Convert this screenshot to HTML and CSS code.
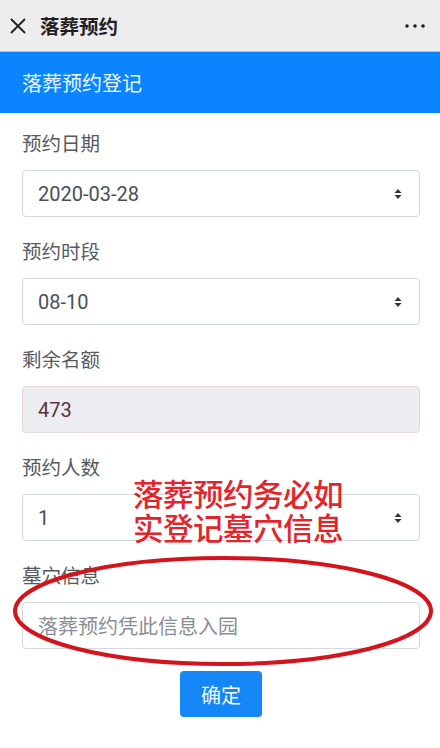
FILE: index.html
```html
<!DOCTYPE html>
<html lang="zh-CN">
<head>
<meta charset="utf-8">
<title>落葬预约</title>
<link rel="stylesheet" href="styles.css">
</head>
<body>
<div class="page">
  <div class="topbar">
    <svg class="close" width="16" height="16" viewBox="0 0 16 16"><path d="M1 1 L15 15 M15 1 L1 15" stroke="#1f1f1f" stroke-width="1.8" fill="none"/></svg>
    <span class="title">落葬预约</span>
    <svg class="more" width="22" height="6" viewBox="0 0 22 6"><circle cx="3" cy="3" r="1.8" fill="#1f1f1f"/><circle cx="11" cy="3" r="1.8" fill="#1f1f1f"/><circle cx="19" cy="3" r="1.8" fill="#1f1f1f"/></svg>
  </div>
  <div class="header">落葬预约登记</div>
  <form class="form">
    <div class="group">
      <div class="label">预约日期</div>
      <div class="control select"><span>2020-03-28</span><svg class="arrows" width="8" height="12" viewBox="0 0 8 12"><path d="M4 1 L7.5 5 L0.5 5 Z M4 11 L7.5 7 L0.5 7 Z" fill="#333"/></svg></div>
    </div>
    <div class="group">
      <div class="label">预约时段</div>
      <div class="control select"><span>08-10</span><svg class="arrows" width="8" height="12" viewBox="0 0 8 12"><path d="M4 1 L7.5 5 L0.5 5 Z M4 11 L7.5 7 L0.5 7 Z" fill="#333"/></svg></div>
    </div>
    <div class="group">
      <div class="label">剩余名额</div>
      <div class="control readonly"><span>473</span></div>
    </div>
    <div class="group">
      <div class="label">预约人数</div>
      <div class="control select"><span>1</span><svg class="arrows" width="8" height="12" viewBox="0 0 8 12"><path d="M4 1 L7.5 5 L0.5 5 Z M4 11 L7.5 7 L0.5 7 Z" fill="#333"/></svg></div>
    </div>
    <div class="group">
      <div class="label">墓穴信息</div>
      <div class="control"><span class="placeholder">落葬预约凭此信息入园</span></div>
    </div>
    <div class="actions"><button type="button" class="btn">确定</button></div>
  </form>
  <div class="note">落葬预约务必如<br>实登记墓穴信息</div>
  <svg class="circle" width="440" height="748" viewBox="0 0 440 748"><ellipse cx="223" cy="611" rx="208" ry="53" fill="none" stroke="#d4141c" stroke-width="4"/></svg>
</div>
</body>
</html>
```

FILE: styles.css
```css
html, body {
  margin: 0;
  padding: 0;
  background: #ffffff;
}
body {
  font-family: Roboto, "Noto Sans CJK SC", sans-serif;
  color: #4a4f55;
}
.page {
  position: relative;
  width: 440px;
  height: 748px;
  overflow: hidden;
  background: #fff;
}
.topbar {
  height: 51px;
  background: #ededee;
  display: flex;
  align-items: center;
  padding: 0 14px 0 10px;
  box-sizing: border-box;
}
.close {
  display: block;
  margin-right: 14px;
}
.title {
  font-size: 19.5px;
  font-weight: 700;
  color: #1f1f1f;
  flex: 1;
}
.more {
  display: block;
}
.header {
  height: 62px;
  background: #0a84ff;
  border-top: 1px solid #8fd0f6;
  box-sizing: border-box;
  display: flex;
  align-items: center;
  padding-left: 22px;
  font-size: 20px;
  color: #eef6ff;
}
.form {
  padding: 17px 20px 0 22px;
  display: flex;
  flex-direction: column;
  gap: 21px;
}
.group {
  display: flex;
  flex-direction: column;
}
.label {
  height: 30px;
  line-height: 30px;
  font-size: 19.5px;
  color: #555a60;
  margin-bottom: 10px;
}
.control {
  height: 47px;
  box-sizing: border-box;
  border: 1px solid #d5d8dc;
  border-radius: 4px;
  display: flex;
  align-items: center;
  justify-content: space-between;
  padding: 0 17px 0 15px;
  font-size: 20px;
  color: #4a4f55;
  background: #fff;
}
.arrows {
  display: block;
}
.readonly {
  background: #ecedf0;
  border-color: #ead7dd;
  color: #5e2f42;
}
.placeholder {
  color: #8a8e93;
}
.actions {
  display: flex;
  justify-content: center;
  margin-top: 1px;
}
.btn {
  width: 82px;
  height: 46px;
  border: none;
  border-radius: 4px;
  background: #1486f5;
  color: #f4f9ff;
  font-family: "Noto Sans CJK SC", sans-serif;
  font-size: 20px;
  padding: 0;
}
.note {
  position: absolute;
  left: 133px;
  top: 476px;
  font-family: "Noto Sans CJK SC", sans-serif;
  font-size: 30.5px;
  line-height: 34px;
  font-weight: 500;
  color: #e3242b;
  letter-spacing: -0.5px;
}
.circle {
  position: absolute;
  left: 0;
  top: 0;
  pointer-events: none;
}
```
